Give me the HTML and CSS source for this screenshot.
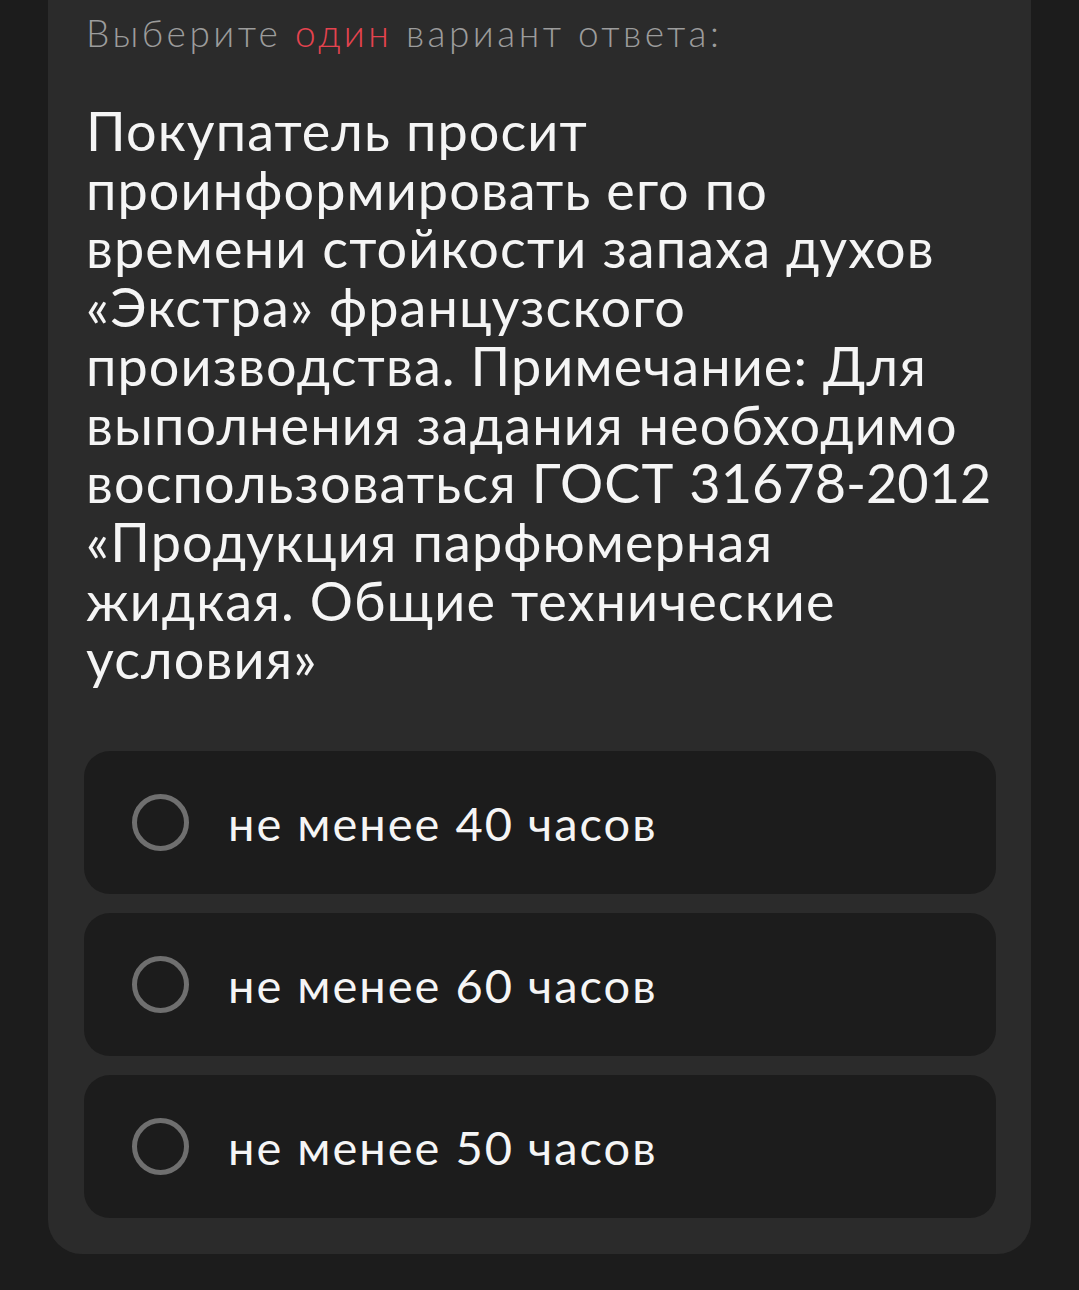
FILE: index.html
```html
<!DOCTYPE html>
<html lang="ru">
<head>
<meta charset="utf-8">
<title>Вопрос</title>
<link rel="stylesheet" href="styles.css">
</head>
<body>
<div class="page">
  <section class="card">
    <p class="hint">Выберите <span class="accent">один</span> вариант ответа:</p>
    <h1 class="question">Покупатель просит<br>проинформировать его по<br>времени стойкости запаха духов<br>«Экстра» французского<br>производства. Примечание: Для<br>выполнения задания необходимо<br>воспользоваться ГОСТ <span class="num">31678-2012</span><br>«Продукция парфюмерная<br>жидкая. Общие технические<br>условия»</h1>
    <ul class="options">
      <li class="option"><span class="radio"></span><span class="label">не менее 40 часов</span></li>
      <li class="option"><span class="radio"></span><span class="label">не менее 60 часов</span></li>
      <li class="option"><span class="radio"></span><span class="label">не менее 50 часов</span></li>
    </ul>
  </section>
</div>
</body>
</html>
```
FILE: styles.css
```css
html, body {
  margin: 0;
  padding: 0;
  background: #1c1c1c;
  height: 100%;
  overflow: hidden;
}

body {
  font-family: Lato, "Noto Sans", sans-serif;
  color: #f4f4f4;
}

.page {
  padding: 0 48px 0 48px;
}

.card {
  margin-top: -40px;
  background: #2b2b2b;
  border-radius: 34px;
  padding: 51px 35px 36px 36px;
}

.hint {
  margin: 0;
  font-size: 37px;
  line-height: 44px;
  font-weight: 300;
  letter-spacing: 3.5px;
  color: #9c9c9c;
  padding-left: 2px;
  white-space: nowrap;
}

.accent {
  color: #e5434f;
}

.question {
  margin: 47px 0 0 0;
  padding-left: 2px;
  font-size: 54px;
  line-height: 58.7px;
  font-weight: 400;
  letter-spacing: 1.1px;
  color: #f5f5f5;
  white-space: nowrap;
}

.num {
  letter-spacing: 0;
}

.options {
  list-style: none;
  margin: 62px 0 0 0;
  padding: 0;
  display: flex;
  flex-direction: column;
  gap: 19px;
}

.option {
  height: 143px;
  background: #1c1c1c;
  border-radius: 26px;
  display: flex;
  align-items: center;
  padding-left: 48px;
}

.radio {
  width: 47px;
  height: 47px;
  border: 5.5px solid #6f6f6f;
  border-radius: 50%;
  flex: none;
}

.label {
  margin-left: 39px;
  font-size: 47px;
  letter-spacing: 2px;
  color: #f5f5f5;
}
```
